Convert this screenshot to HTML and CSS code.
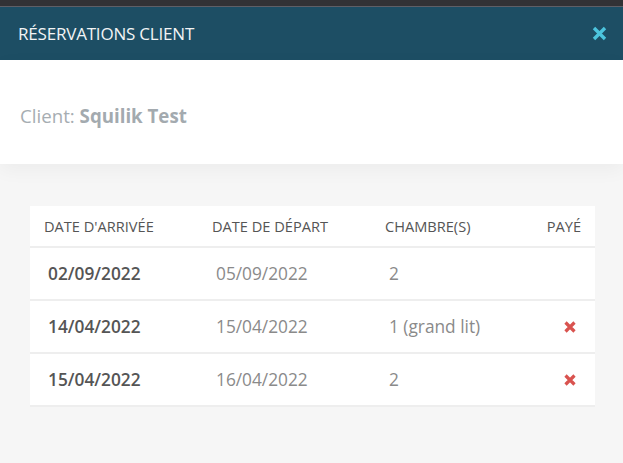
FILE: index.html
```html
<!DOCTYPE html>
<html lang="fr">
<head>
<meta charset="utf-8">
<title>Réservations client</title>
<link rel="stylesheet" href="styles.css">
</head>
<body>
<div class="topbar"></div>
<header class="modal-header">
  <h1 class="modal-title">RÉSERVATIONS CLIENT</h1>
  <button class="close" aria-label="Fermer">
    <svg width="15" height="15" viewBox="0 0 15 15"><path d="M2 2 L13 13 M13 2 L2 13" stroke="#4cc4dd" stroke-width="3.4" stroke-linecap="butt"/></svg>
  </button>
</header>
<section class="client">
  <p class="client-line">Client: <strong>Squilik Test</strong></p>
</section>
<main class="content">
  <div class="card">
    <div class="row head">
      <div class="cell">DATE D'ARRIVÉE</div>
      <div class="cell">DATE DE DÉPART</div>
      <div class="cell">CHAMBRE(S)</div>
      <div class="cell paid">PAYÉ</div>
    </div>
    <div class="row">
      <div class="cell strong">02/09/2022</div>
      <div class="cell">05/09/2022</div>
      <div class="cell">2</div>
      <div class="cell paid"></div>
    </div>
    <div class="row">
      <div class="cell strong">14/04/2022</div>
      <div class="cell">15/04/2022</div>
      <div class="cell">1 (grand lit)</div>
      <div class="cell paid"><svg class="x" width="12" height="12" viewBox="0 0 12 12"><path d="M1.5 1.5 L10.5 10.5 M10.5 1.5 L1.5 10.5" stroke="#d9534f" stroke-width="3.2" /></svg></div>
    </div>
    <div class="row">
      <div class="cell strong">15/04/2022</div>
      <div class="cell">16/04/2022</div>
      <div class="cell">2</div>
      <div class="cell paid"><svg class="x" width="12" height="12" viewBox="0 0 12 12"><path d="M1.5 1.5 L10.5 10.5 M10.5 1.5 L1.5 10.5" stroke="#d9534f" stroke-width="3.2" /></svg></div>
    </div>
  </div>
</main>
</body>
</html>
```
FILE: styles.css
```css
* { box-sizing: border-box; }
html, body { margin: 0; padding: 0; }
body {
  font-family: "Open Sans", "Noto Sans", sans-serif;
  background: #f6f6f6;
  width: 623px;
  height: 463px;
  overflow: hidden;
}
.topbar {
  height: 7px;
  background: #323235;
  border-bottom: 1px solid #5f5f66;
}
.modal-header {
  height: 53px;
  background: #1d4e64;
  display: flex;
  align-items: center;
  justify-content: space-between;
  padding: 0 16px 0 18px;
}
.modal-title {
  margin: 0;
  font-size: 17px;
  font-weight: 400;
  color: #f2f4f5;
  letter-spacing: -0.2px;
}
.close {
  border: 0;
  background: none;
  padding: 0;
  width: 15px;
  height: 15px;
  display: flex;
}
.client {
  height: 104px;
  background: #fff;
  display: flex;
  align-items: center;
  padding: 6px 20px 0;
  box-shadow: 0 6px 18px rgba(0, 0, 0, 0.045);
  position: relative;
}
.client-line {
  margin: 0;
  font-size: 18.7px;
  color: #a6adb2;
}
.client-line strong { font-weight: 700; color: #a3aaaf; }
.content {
  padding: 42px 28px 0 30px;
}
.card {
  background: #fff;
  width: 565px;
}
.row {
  display: grid;
  grid-template-columns: 168px 173px 1fr 80px;
  align-items: center;
  height: 53px;
  padding: 0 14px;
  border-bottom: 2px solid #eeeeee;
  font-size: 17.3px;
  color: #8a8a8a;
}
.row .cell { padding-left: 4px; white-space: nowrap; }
.row.head {
  height: 42px;
  font-size: 14.6px;
  color: #555;
}
.row.head .cell { padding-left: 0; }
.cell.strong { font-weight: 600; color: #555; }
.cell.paid {
  text-align: right;
  display: flex;
  justify-content: flex-end;
}
.row .cell.paid { padding-left: 0; }
.x { margin-right: 5px; }
```
